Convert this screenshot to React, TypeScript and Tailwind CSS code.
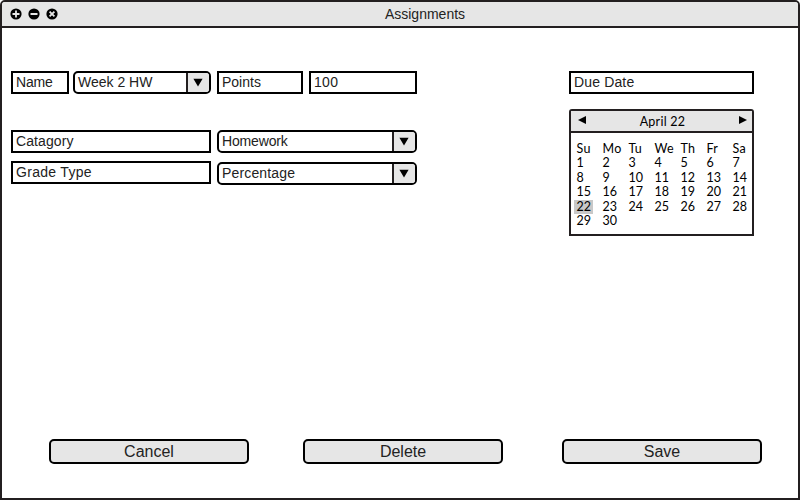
import React from "react";

const INK = "border-[#231f20]";

function Field({ text, className = "" }: { text: string; className?: string }) {
  return (
    <div className={`h-[23px] border-2 border-black bg-white pl-[3px] text-[14px] leading-[19px] whitespace-nowrap text-[#222] ${className}`}>
      {text}
    </div>
  );
}

function Combo({ text, className = "" }: { text: string; className?: string }) {
  return (
    <div className={`flex h-[23px] overflow-hidden rounded-[5px] border-2 border-black bg-white text-[14px] leading-[19px] whitespace-nowrap text-[#222] ${className}`}>
      <span className="flex-1 pl-[3px]">{text}</span>
      <span className={`flex w-[23px] items-center justify-center border-l-2 bg-[#e6e6e6] pr-[1px] ${INK}`}>
        <svg width="10" height="9" viewBox="0 0 10 9">
          <path d="M0.4 0.8h9.2L5 8.4z" fill="#000" />
        </svg>
      </span>
    </div>
  );
}

function Button({ text, className = "" }: { text: string; className?: string }) {
  return (
    <button className={`h-[25px] w-[200px] rounded-[5px] border-2 border-black bg-[#e6e6e6] text-center text-[16px] leading-[21px] text-[#222] ${className}`}>
      {text}
    </button>
  );
}

function WindowIcon({ d }: { d: string }) {
  return (
    <svg width="12" height="12" viewBox="0 0 12 12">
      <circle cx="6" cy="6" r="5.6" fill="#000" />
      <path d={d} stroke="#e6e6e6" strokeWidth="1.8" fill="none" />
    </svg>
  );
}

const dayNames = ["Su", "Mo", "Tu", "We", "Th", "Fr", "Sa"];
const days = Array.from({ length: 30 }, (_, i) => i + 1);

function Calendar() {
  return (
    <div className={`mt-[15px] h-[127px] w-[185px] rounded-t-[3px] border-2 bg-white font-['Lato',sans-serif] text-[12.5px] ${INK}`}>
      <div className={`flex h-[22px] items-center justify-between border-b-2 bg-[#e6e6e6] pr-[5px] pl-[7px] ${INK}`}>
        <svg width="8" height="8" viewBox="0 0 8 8" className="mb-[2px]">
          <path d="M8 0v8L0 4z" />
        </svg>
        <span className="pt-[2px] tracking-[0.25px]">April 22</span>
        <svg width="8" height="8" viewBox="0 0 8 8" className="mb-[2px]">
          <path d="M0 0v8l8-4z" />
        </svg>
      </div>
      <div className="grid auto-rows-[14.5px] grid-cols-[repeat(7,26px)] pt-[8.5px] pl-[3px] leading-[14.5px]">
        {dayNames.map((d) => (
          <span key={d} className="pt-[0.5px] pl-[2.5px] tracking-[0.3px]">{d}</span>
        ))}
        {days.map((d) => (
          <span key={d} className={`h-[14px] w-[19px] pl-[2.5px] leading-[14px] whitespace-nowrap ${d === 22 ? "bg-[#c8c8c8]" : ""}`}>
            {d}
          </span>
        ))}
      </div>
    </div>
  );
}

export default function App() {
  return (
    <div className="h-[500px] w-[800px] overflow-hidden bg-white font-['Liberation_Sans',Arial,sans-serif] text-black">
      <div className={`flex h-[500px] w-[800px] flex-col overflow-hidden rounded-t-[5px] border-2 bg-white ${INK}`}>
        <header className={`grid h-[26px] shrink-0 grid-cols-[1fr_auto_1fr] border-b-2 bg-[#e6e6e6] ${INK}`}>
          <div className="flex gap-[6px] pt-[5.5px] pl-[7.5px]">
            <WindowIcon d="M6 2.5v7M2.5 6h7" />
            <WindowIcon d="M2.5 6h7" />
            <WindowIcon d="M3.6 3.6l4.8 4.8M8.4 3.6l-4.8 4.8" />
          </div>
          <h1 className="pl-[50px] text-[14px] leading-[24px] text-[#222]">Assignments</h1>
        </header>
        <main className="flex h-[411px] items-start justify-between pt-[43px] pr-[44px] pl-[9px]">
          <div className="w-[406px]">
            <div className="flex">
              <Field text="Name" className="w-[58px] tracking-[-0.2px]" />
              <Combo text="Week 2 HW" className="ml-[4px] w-[138px]" />
              <Field text="Points" className="ml-[6px] w-[86px]" />
              <Field text="100" className="ml-[6px] w-[108px] tracking-[0.3px]" />
            </div>
            <div className="mt-[36px] flex gap-[6px]">
              <Field text="Catagory" className="w-[200px] tracking-[0.1px]" />
              <Combo text="Homework" className="w-[200px] tracking-[-0.15px]" />
            </div>
            <div className="mt-[8px] flex gap-[6px]">
              <Field text="Grade Type" className="w-[200px] tracking-[0.3px]" />
              <Combo text="Percentage" className="mt-[1px] w-[200px] tracking-[0.15px]" />
            </div>
          </div>
          <div>
            <Field text="Due Date" className="w-[185px] tracking-[0.15px]" />
            <Calendar />
          </div>
        </main>
        <footer className="flex pl-[47px]">
          <Button text="Cancel" />
          <Button text="Delete" className="ml-[54px]" />
          <Button text="Save" className="ml-[59px]" />
        </footer>
      </div>
    </div>
  );
}
